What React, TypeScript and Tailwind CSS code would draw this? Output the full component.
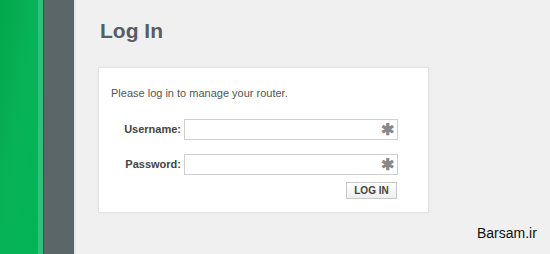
export default function App() {
  return (
    <div className="flex h-[254px] w-[550px] overflow-hidden bg-[#f0f0f0] font-['Liberation_Sans',Arial,sans-serif]">
      {/* left bars */}
      <div className="w-[38px] bg-gradient-to-br from-[#03a84c] via-[#08b357] to-[#02b454]" />
      <div className="w-[5px] bg-[#2cc27c]" />
      <div className="w-px bg-[#3d4f4a]" />
      <div className="w-[30px] bg-[#5b6669]" />
      <div className="w-[2px] bg-[#e6e6e6]" />

      {/* content */}
      <div className="relative flex-1 pl-[22px]">
        <h1 className="mt-[18px] ml-[2px] text-[21px] font-bold leading-[26px] text-[#575d60]">Log In</h1>
        <div className="mt-[23px] h-[146px] w-[331px] border border-[#e4e4e4] bg-white shadow-[0_0_2px_rgba(0,0,0,0.06)]">
          <p className="ml-[12px] mt-[19px] text-[11px] leading-[13px] text-[#555]">Please log in to manage your router.</p>
          <div className="mt-[19px] flex items-center">
            <span className="w-[82px] text-right text-[11px] font-bold text-[#444]">Username:</span>
            <div className="ml-[3px] flex h-[21px] w-[214px] items-center justify-end border border-[#cfcfcf] pr-[3px]">
              <span className="text-[16px] font-bold leading-none text-[#888]">✱</span>
            </div>
          </div>
          <div className="mt-[14px] flex items-center">
            <span className="w-[82px] text-right text-[11px] font-bold text-[#444]">Password:</span>
            <div className="ml-[3px] flex h-[21px] w-[214px] items-center justify-end border border-[#cfcfcf] pr-[3px]">
              <span className="text-[16px] font-bold leading-none text-[#888]">✱</span>
            </div>
          </div>
          <div className="mt-[7px] flex justify-end pr-[31px]">
            <button className="h-[17px] w-[51px] border border-[#c8c8c8] bg-gradient-to-b from-white to-[#eeeeee] text-[10px] font-bold leading-none text-[#444]">LOG IN</button>
          </div>
        </div>
        <span className="absolute left-[401px] top-[223px] text-[14px] text-[#111]">Barsam.ir</span>
      </div>
    </div>
  )
}
